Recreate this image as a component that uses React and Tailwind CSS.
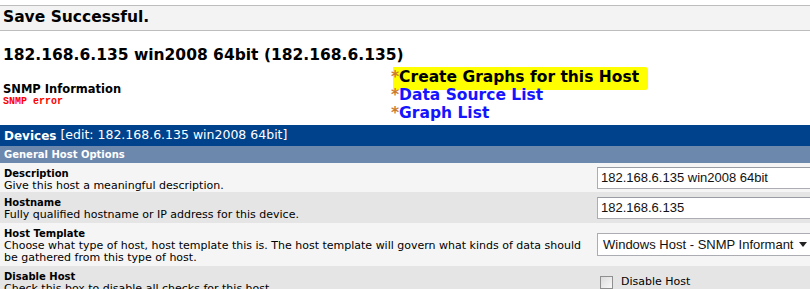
import React from "react";

const rows = [
  {
    label: "Description",
    text: ["Give this host a meaningful description."],
    h: "h-[29px]",
    bg: "bg-[#f5f5f5]",
    field: { type: "input", value: "182.168.6.135 win2008 64bit" },
  },
  {
    label: "Hostname",
    text: ["Fully qualified hostname or IP address for this device."],
    h: "h-[31px]",
    bg: "bg-[#e5e5e5]",
    field: { type: "input", value: "182.168.6.135" },
  },
  {
    label: "Host Template",
    text: [
      "Choose what type of host, host template this is. The host template will govern what kinds of data should",
      "be gathered from this type of host.",
    ],
    h: "h-[43px]",
    bg: "bg-[#f5f5f5]",
    field: { type: "select", value: "Windows Host - SNMP Informant" },
  },
  {
    label: "Disable Host",
    text: ["Check this box to disable all checks for this host."],
    h: "h-[32px]",
    bg: "bg-[#e5e5e5]",
    field: { type: "checkbox", value: "Disable Host" },
  },
];

function Field({ field }) {
  if (field.type === "input") {
    return (
      <div className="w-[240px] h-[22px] bg-white border border-[#abadb3] border-t-[#9a9ca3] flex items-center pl-[3px] font-['Liberation_Sans'] text-[13px] text-[#111] whitespace-nowrap">
        {field.value}
      </div>
    );
  }
  if (field.type === "select") {
    return (
      <div className="w-[214px] h-[23px] bg-white border border-[#abadb3] flex items-center pl-[5px] pr-[3px] font-['Liberation_Sans'] text-[13px] text-[#111] whitespace-nowrap">
        <span className="flex-1">{field.value}</span>
        <svg width="8" height="5" viewBox="0 0 8 5">
          <polygon points="0,0 8,0 4,5" fill="#222" />
        </svg>
      </div>
    );
  }
  return (
    <div className="flex items-center gap-[8px] pl-[3px] text-[11px]">
      <span className="w-[13px] h-[13px] border border-[#8f8f8f] bg-gradient-to-br from-[#dcdcdc] to-[#f8f8f8]" />
      <span>{field.value}</span>
    </div>
  );
}

export default function App() {
  return (
    <div className="w-[810px] h-[289px] overflow-hidden bg-white text-black font-['DejaVu_Sans',sans-serif]">
      <div className="pt-[5px]">
        <div className="h-[26px] border-y border-[#bdbdbd] bg-[#f3f3f3] flex items-center px-[3px] text-[15.5px] font-bold">
          Save Successful.
        </div>
      </div>

      <div className="mt-[15px] px-[3px] text-[15.5px] font-bold leading-[18px] whitespace-nowrap">
        182.168.6.135 win2008 64bit (182.168.6.135)
      </div>

      <div className="mt-[4px] grid grid-cols-[389px_1fr] items-center">
        <div className="px-[3px]">
          <div className="text-[11.5px] font-bold leading-[14px]">SNMP Information</div>
          <div className="font-['Liberation_Mono',monospace] font-bold text-[10px] leading-[12px] text-[#ff0000]">
            SNMP error
          </div>
        </div>
        <div className="relative pl-[2px] text-[15.5px] font-bold leading-[18px] whitespace-nowrap">
          <span className="absolute left-[4px] top-[-1px] w-[255px] h-[23px] bg-[#ffff00] rounded-r-[3px]" />
          <div className="relative">
            <span className="text-[#cc7a2e]">*</span>
            <span className="text-black">Create Graphs for this Host</span>
          </div>
          <div className="relative">
            <span className="text-[#cc7a2e]">*</span>
            <span className="text-[#1414ff]">Data Source List</span>
          </div>
          <div className="relative">
            <span className="text-[#cc7a2e]">*</span>
            <span className="text-[#1414ff]">Graph List</span>
          </div>
        </div>
      </div>

      <div className="mt-[3px] h-[21px] bg-[#00438c] flex items-center px-[4px] text-white whitespace-nowrap">
        <span className="text-[12px] font-bold">Devices</span>
        <span className="text-[12.5px]">&nbsp;[edit: 182.168.6.135 win2008 64bit]</span>
      </div>
      <div className="h-[17px] bg-[#6d88ad] flex items-center px-[4px] text-white text-[10px] font-bold">
        General Host Options
      </div>

      {rows.map((r) => (
        <div key={r.label} className={`grid grid-cols-[597px_1fr] items-center ${r.h} ${r.bg}`}>
          <div className="self-start pt-[5px] px-[4px] leading-[12px] whitespace-nowrap">
            <div className="text-[10px] font-bold">{r.label}</div>
            {r.text.map((t) => (
              <div key={t} className="text-[11px]">
                {t}
              </div>
            ))}
          </div>
          <div>
            <Field field={r.field} />
          </div>
        </div>
      ))}
    </div>
  );
}
